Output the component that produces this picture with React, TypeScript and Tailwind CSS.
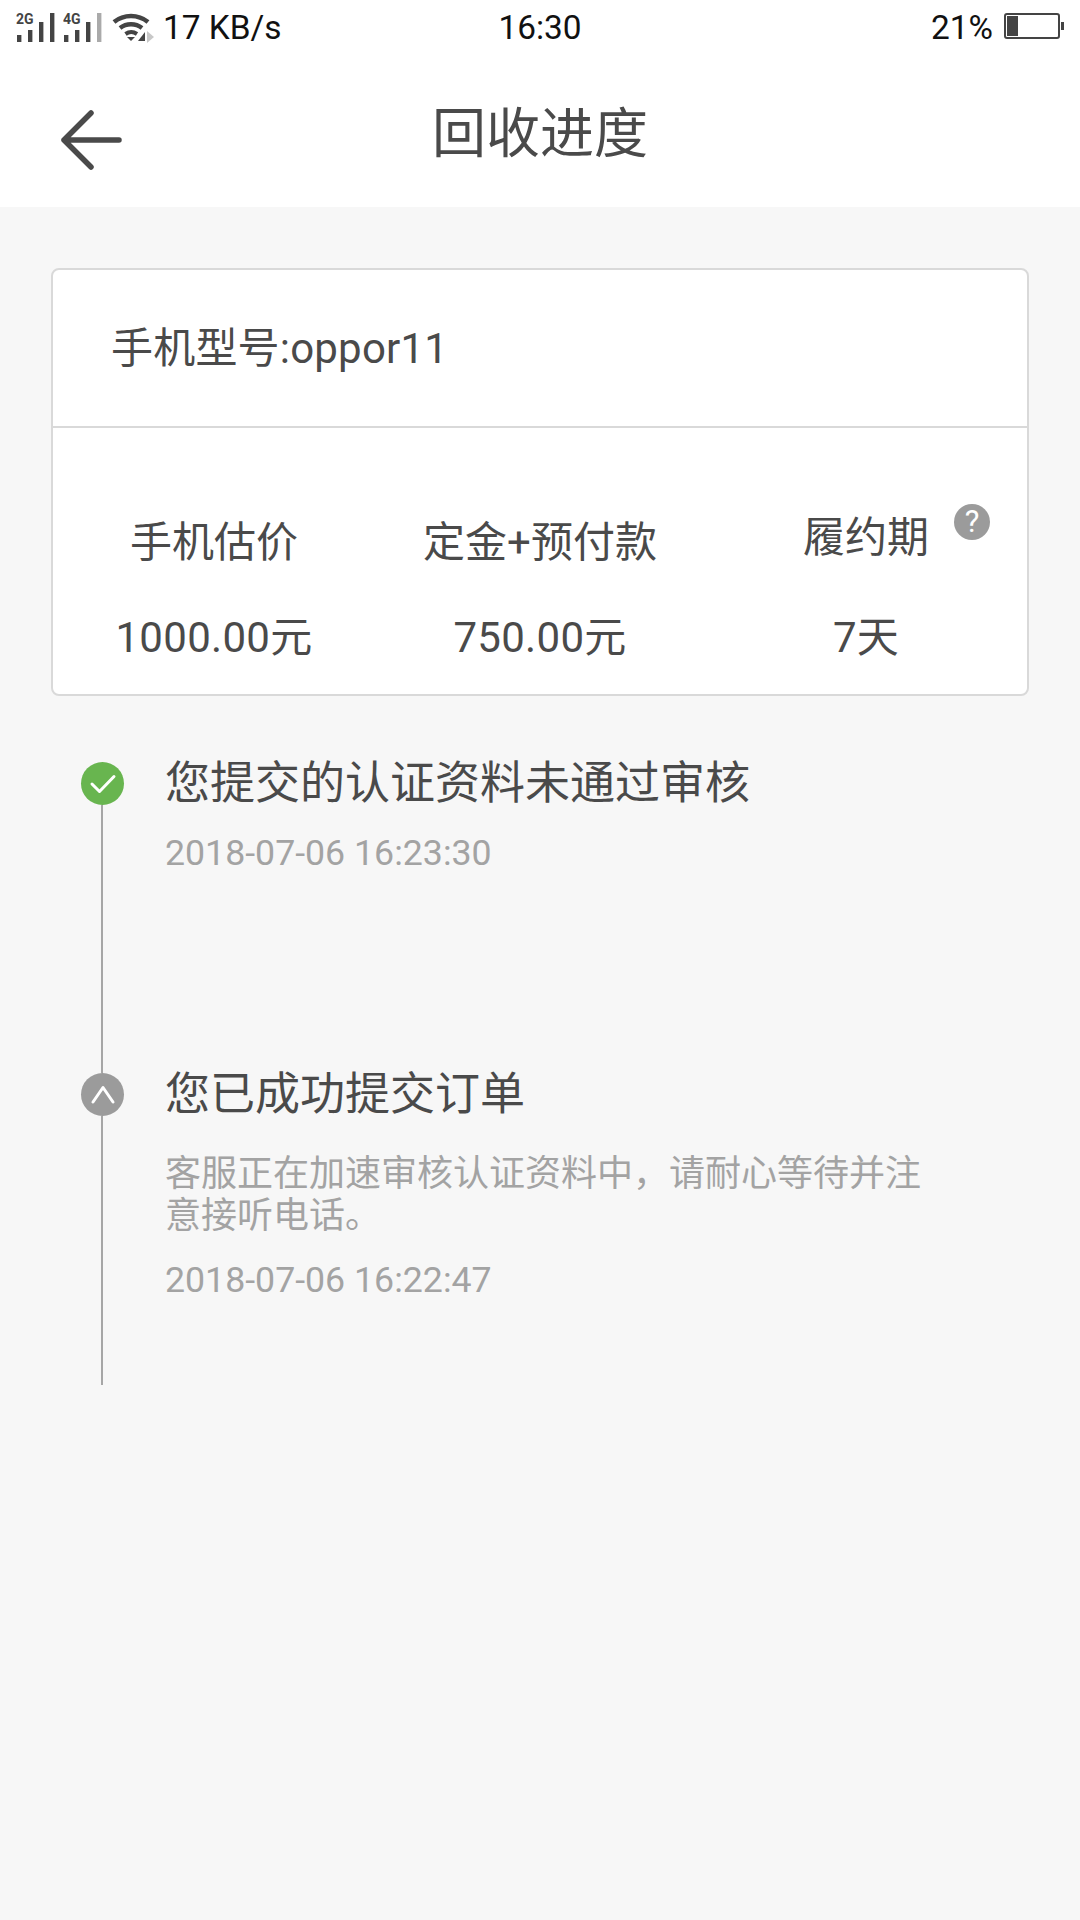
const font = 'font-["Roboto","Noto_Sans_CJK_SC",sans-serif]'

function SignalBars({ label, lastGrey }: { label: string; lastGrey?: boolean }) {
  return (
    <svg width="42" height="36" viewBox="0 -6 42 36" className="block -mt-[6px]">
      <text x="0" y="10.5" fontSize="14" fontWeight="700" fontFamily="Roboto" fill="#444">{label}</text>
      <rect x="1" y="22" width="4.4" height="7" fill="#444" />
      <rect x="12" y="17" width="4.4" height="12" fill="#444" />
      <rect x="23" y="9" width="4.4" height="20" fill="#444" />
      <rect x="34" y="0" width="4.4" height="29" fill={lastGrey ? '#aaa' : '#444'} />
    </svg>
  )
}

function WifiIcon() {
  return (
    <svg width="44" height="30" viewBox="0 0 44 30" className="block">
      <path d="M2 9 A27 27 0 0 1 36 9" fill="none" stroke="#444" strokeWidth="4.5" />
      <path d="M8 15 A18 18 0 0 1 30 15" fill="none" stroke="#444" strokeWidth="4.5" />
      <path d="M13.5 21 A10 10 0 0 1 25 21" fill="none" stroke="#444" strokeWidth="4" />
      <path d="M15 24 L19 28 L23 24 Z" fill="#444" />
      <path d="M26 28 L33 19 L33 28 Z" fill="#444" />
      <path d="M35 18 L42 24 L35 30 Z" fill="#c8c8c8" />
    </svg>
  )
}

function Battery() {
  return (
    <div className="flex items-center gap-[1px]">
      <div className="w-[56px] h-[26px] rounded-[3px] border-2 border-[#444] p-[1px] flex">
        <div className="w-[11px] h-full bg-[#444]" />
      </div>
      <div className="w-[3px] h-[8px] bg-[#444]" />
    </div>
  )
}

function BackArrow() {
  return (
    <svg width="64" height="64" viewBox="0 0 64 64" className="block">
      <path d="M31 5 L4 32 L31 59 M4 32 H59" fill="none" stroke="#4a4a4a" strokeWidth="5.5" strokeLinecap="round" strokeLinejoin="round" />
    </svg>
  )
}

function Stat({ label, value, help }: { label: string; value: string; help?: boolean }) {
  return (
    <div className="flex flex-col items-center">
      <div className={help ? 'relative h-[58px] leading-[48px]' : 'h-[58px] leading-[58px]'}>
        {label}
        {help && (
          <span className="absolute left-[151px] top-[-10px] w-[36px] h-[36px] rounded-full bg-[#9b9b9b] text-white text-[31px] leading-[36px] text-center font-normal">
            ?
          </span>
        )}
      </div>
      <div className="mt-[37px] leading-[58px] tracking-[0.3px]">{value}</div>
    </div>
  )
}

function Dot({ kind }: { kind: 'done' | 'up' }) {
  return (
    <div className={kind === 'done' ? 'w-[43px] h-[43px] rounded-full bg-[#68b54f] shrink-0' : 'w-[43px] h-[43px] rounded-full bg-[#9b9b9b] shrink-0'}>
      <svg width="43" height="43" viewBox="0 0 43 43" className="block">
        {kind === 'done' ? (
          <path d="M11 22 L18.5 29.5 L33 14.5" fill="none" stroke="#fff" strokeWidth="3" strokeLinecap="round" strokeLinejoin="round" />
        ) : (
          <path d="M12 29 L22 14.5 L32 29" fill="none" stroke="#fff" strokeWidth="3" strokeLinecap="round" strokeLinejoin="round" />
        )}
      </svg>
    </div>
  )
}

function Step({ kind, title, desc, time, height }: { kind: 'done' | 'up'; title: string; desc?: string; time: string; height: string }) {
  return (
    <div className={`flex ${height}`}>
      <div className="w-[43px] flex flex-col shrink-0">
        <Dot kind={kind} />
        <div className="w-[2px] ml-[20px] flex-1 bg-[#a6a6a6]" />
      </div>
      <div className="ml-[41px] flex-1">
        <div className="text-[45px] leading-[44px] text-[#4a4a4a]">{title}</div>
        {desc && <div className="mt-[36px] w-[770px] text-[36px] leading-[42px] text-[#a3a3a3]">{desc}</div>}
        <div className={desc ? 'mt-[22px] text-[35.7px] leading-[42px] text-[#a3a3a3]' : 'mt-[26px] text-[35.7px] leading-[42px] text-[#a3a3a3]'}>{time}</div>
      </div>
    </div>
  )
}

export default function App() {
  return (
    <div className={`${font} w-[1080px] h-[1920px] bg-[#f7f7f7] flex flex-col overflow-hidden`}>
      <div className="bg-white h-[207px] shrink-0 flex flex-col">
        <div className="h-[56px] px-[16px] pt-[13px] flex justify-between text-[33.4px] leading-[30px] text-[#111]">
          <div className="flex-1 flex items-start">
            <SignalBars label="2G" />
            <div className="ml-[5px]"><SignalBars label="4G" lastGrey /></div>
            <div className="ml-[7px]"><WifiIcon /></div>
            <span className="ml-[7px]">17 KB/s</span>
          </div>
          <span>16:30</span>
          <div className="flex-1 flex justify-end items-start">
            <span>21%</span>
            <div className="ml-[11px]"><Battery /></div>
          </div>
        </div>
        <div className="flex-1 relative flex items-center justify-center pt-[6px]">
          <div className="absolute left-[60px] top-[52px]"><BackArrow /></div>
          <span className="text-[54px] leading-[64px] text-[#4a4a4a]">回收进度</span>
        </div>
      </div>

      <div className="mx-[51px] mt-[61px] h-[428px] bg-white border-2 border-[#d9d9d9] rounded-[8px] text-[42px] text-[#4a4a4a] flex flex-col">
        <div className="h-[158px] flex items-center pl-[58px] border-b-2 border-[#d9d9d9] shrink-0 tracking-[0.2px]">手机型号:oppor11</div>
        <div className="grid grid-cols-3 gap-x-[4px] pt-[86px]">
          <Stat label="手机估价" value="1000.00元" />
          <Stat label="定金+预付款" value="750.00元" />
          <Stat label="履约期" value="7天" help />
        </div>
      </div>

      <div className="mt-[66px] ml-[81px]">
        <Step kind="done" title="您提交的认证资料未通过审核" time="2018-07-06 16:23:30" height="h-[311px]" />
        <Step kind="up" title="您已成功提交订单" desc="客服正在加速审核认证资料中，请耐心等待并注意接听电话。" time="2018-07-06 16:22:47" height="h-[312px]" />
      </div>
    </div>
  )
}
